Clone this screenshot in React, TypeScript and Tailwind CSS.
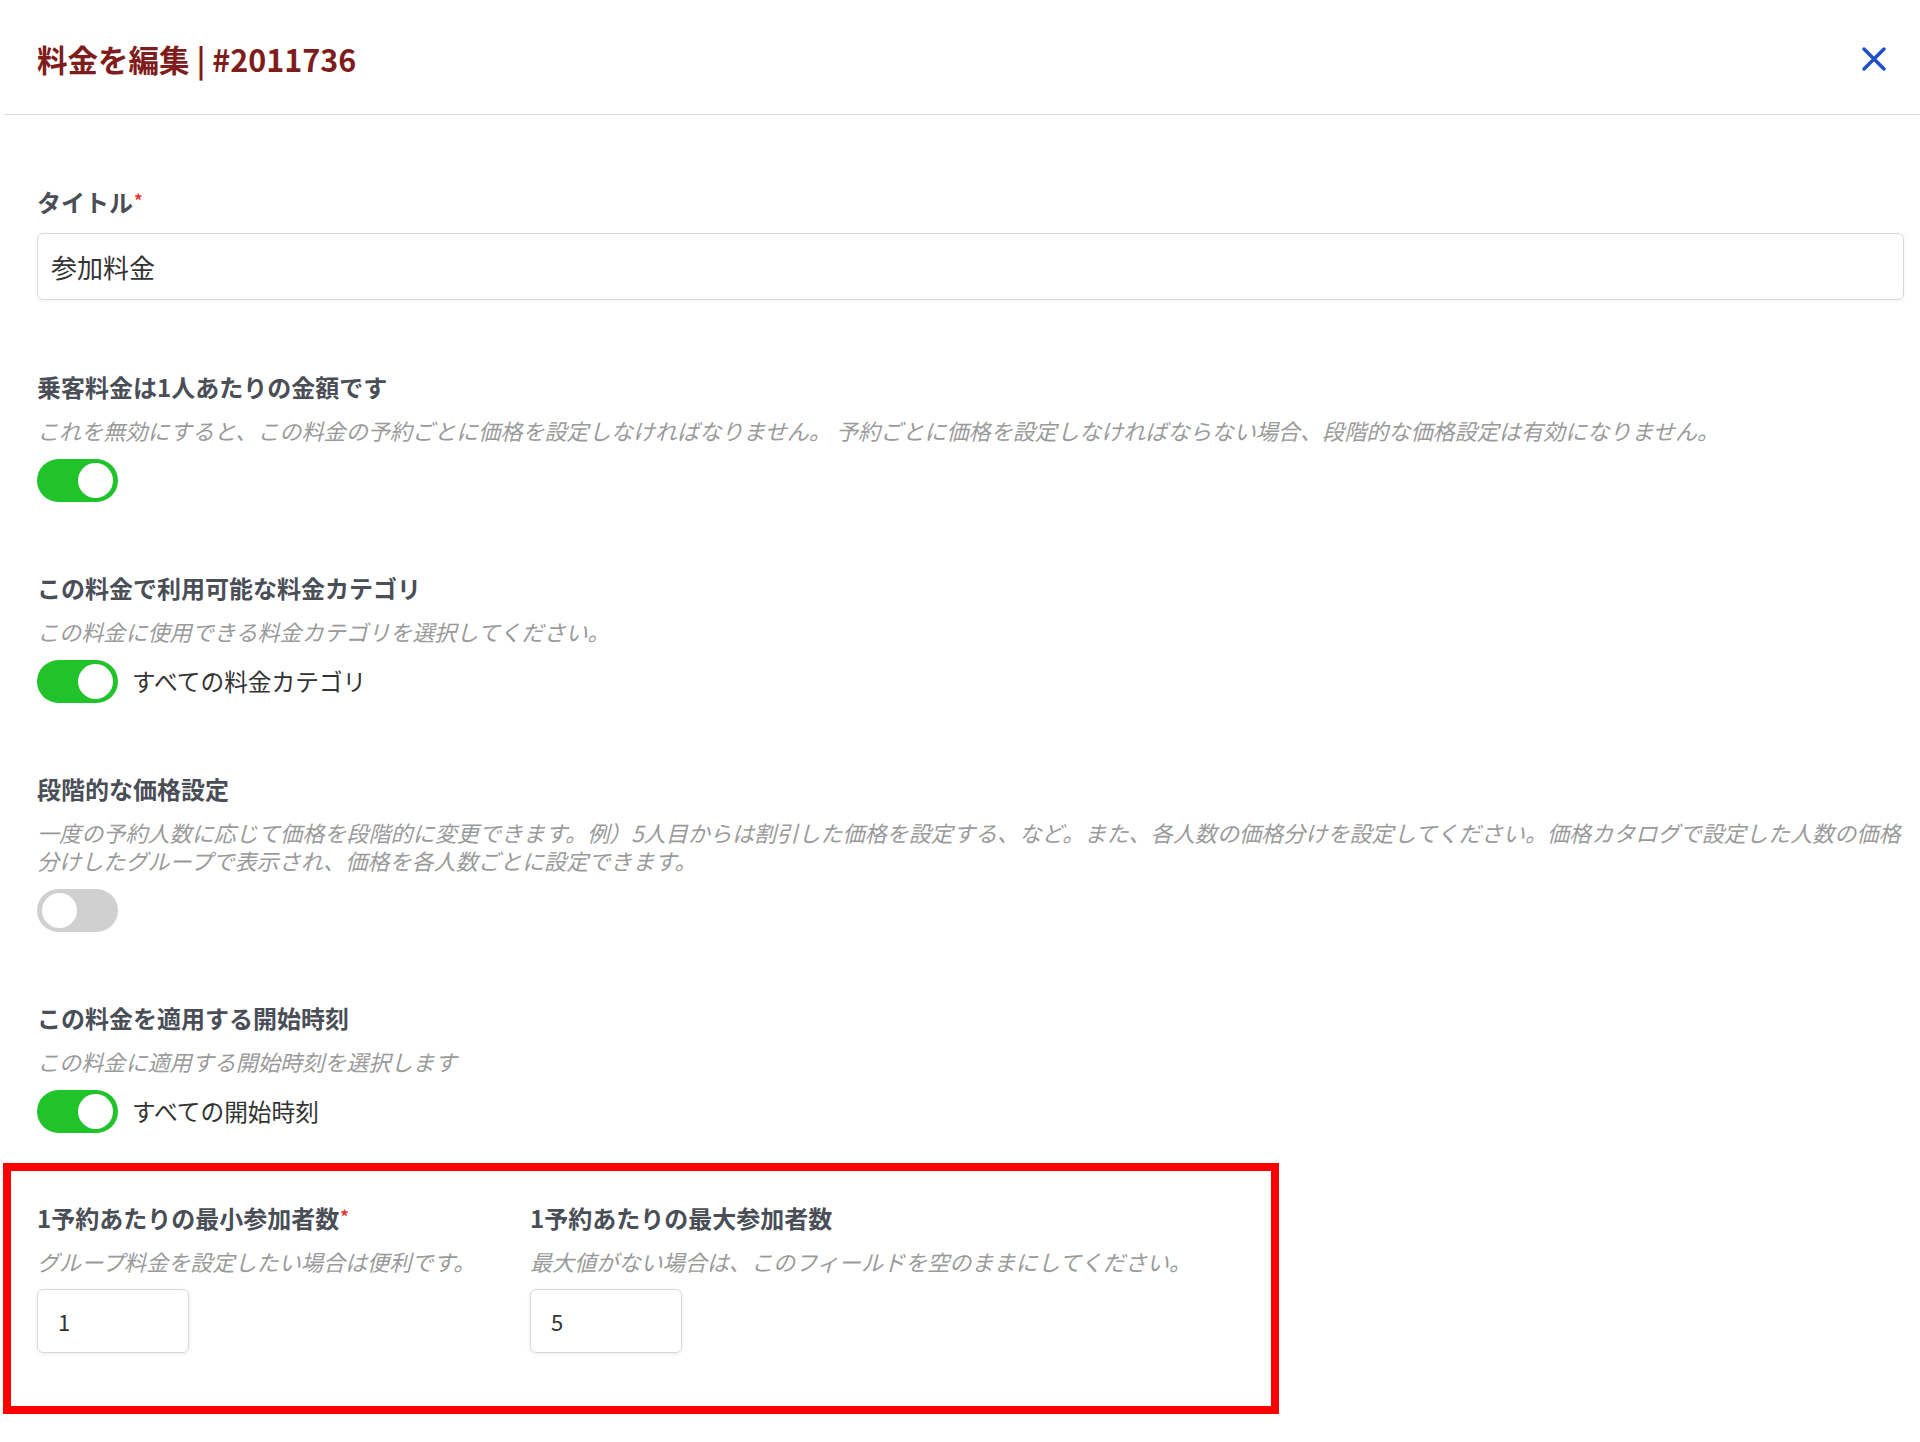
import React from 'react';

const Toggle: React.FC<{ on: boolean }> = ({ on }) => (
  <div
    className={`relative w-[81px] h-[43px] rounded-full shrink-0 ${on ? 'bg-[#21c32b]' : 'bg-[#d0d0d0]'}`}
  >
    <div
      className={`absolute top-[4px] w-[35px] h-[35px] rounded-full bg-white ${on ? 'right-[5px]' : 'left-[5px]'}`}
    />
  </div>
);

const Label: React.FC<{ text: string; required?: boolean }> = ({ text, required }) => (
  <div className="text-[24px] leading-[32px] font-bold text-[#4a4e57]">
    {text}
    {required && <span className="text-[#e8332f] text-[17px] align-top relative -top-[2px] ml-[1px]">*</span>}
  </div>
);

const Desc: React.FC<{ children: React.ReactNode }> = ({ children }) => (
  <p className="mt-[13px] text-[22.1px] leading-[28px] italic text-[#9a9a9a]">{children}</p>
);

const ToggleRow: React.FC<{ on: boolean; text?: string }> = ({ on, text }) => (
  <div className="mt-[15px] flex items-center gap-[14px]">
    <Toggle on={on} />
    {text && <span className="text-[23.7px] text-[#333]">{text}</span>}
  </div>
);

export default function App() {
  return (
    <div className="min-h-screen bg-white font-['Noto_Sans_CJK_JP','Noto_Sans',sans-serif]">
      <header className="ml-[4px] h-[115px] border-b border-[#dcdcdc] flex items-center justify-between pl-[33px] pr-[33px] pt-[4px]">
        <h1 className="text-[30.5px] leading-[40px] font-bold text-[#7f1d1d]">料金を編集 | #2011736</h1>
        <button className="text-[#1f4fc9]" aria-label="close">
          <svg width="26" height="26" viewBox="0 0 26 26" fill="none" stroke="currentColor" strokeWidth="3.5" strokeLinecap="round">
            <path d="M3 3 L23 23 M23 3 L3 23" />
          </svg>
        </button>
      </header>

      <main className="pl-[37px] pr-[16px] pt-[71px]">
        <section>
          <Label text="タイトル" required />
          <input
            defaultValue="参加料金"
            className="mt-[15px] w-full h-[67px] rounded-[6px] border border-[#d9d9d9] shadow-[0_1px_4px_rgba(0,0,0,0.06)] px-[13px] text-[26px] text-[#333] outline-none"
          />
        </section>

        <section className="mt-[71px]">
          <Label text="乗客料金は1人あたりの金額です" />
          <Desc>
            これを無効にすると、この料金の予約ごとに価格を設定しなければなりません。 予約ごとに価格を設定しなければならない場合、段階的な価格設定は有効になりません。
          </Desc>
          <ToggleRow on />
        </section>

        <section className="mt-[70px]">
          <Label text="この料金で利用可能な料金カテゴリ" />
          <Desc>この料金に使用できる料金カテゴリを選択してください。</Desc>
          <ToggleRow on text="すべての料金カテゴリ" />
        </section>

        <section className="mt-[70px]">
          <Label text="段階的な価格設定" />
          <Desc>
            一度の予約人数に応じて価格を段階的に変更できます。例）5人目からは割引した価格を設定する、など。また、各人数の価格分けを設定してください。価格カタログで設定した人数の価格分けしたグループで表示され、価格を各人数ごとに設定できます。
          </Desc>
          <ToggleRow on={false} />
        </section>

        <section className="mt-[70px]">
          <Label text="この料金を適用する開始時刻" />
          <Desc>この料金に適用する開始時刻を選択します</Desc>
          <ToggleRow on text="すべての開始時刻" />
        </section>
      </main>

      <div className="mt-[30px] ml-[3px] w-[1276px] border-8 border-[#ff0000] pl-[26px] pt-[31px] pb-[53px]">
        <div className="flex">
          <div className="w-[493px] shrink-0">
            <Label text="1予約あたりの最小参加者数" required />
            <Desc>グループ料金を設定したい場合は便利です。</Desc>
            <input
              defaultValue="1"
              className="mt-[14px] w-[152px] h-[64px] rounded-[6px] border border-[#d9d9d9] shadow-[0_1px_4px_rgba(0,0,0,0.08)] px-[20px] text-[22px] text-[#333] outline-none"
            />
          </div>
          <div className="flex-1">
            <Label text="1予約あたりの最大参加者数" />
            <Desc>最大値がない場合は、このフィールドを空のままにしてください。</Desc>
            <input
              defaultValue="5"
              className="mt-[14px] w-[152px] h-[64px] rounded-[6px] border border-[#d9d9d9] shadow-[0_1px_4px_rgba(0,0,0,0.08)] px-[20px] text-[22px] text-[#333] outline-none"
            />
          </div>
        </div>
      </div>
    </div>
  );
}
